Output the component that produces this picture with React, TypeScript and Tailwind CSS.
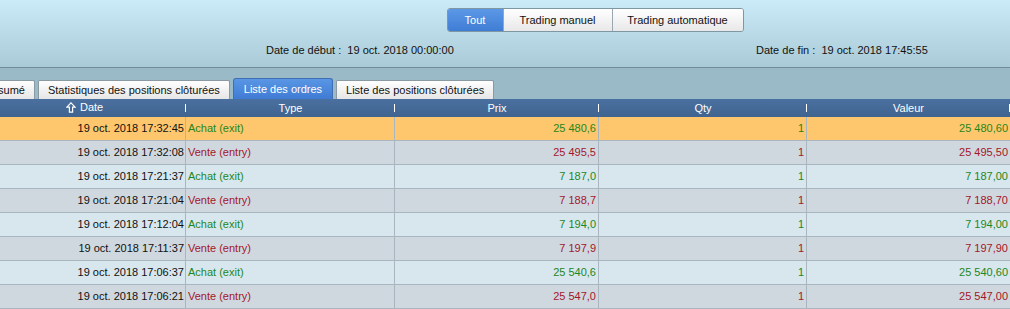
import React from 'react';

type Row = { date: string; buy: boolean; prix: string; valeur: string };

const rows: Row[] = [
  { date: '19 oct. 2018 17:32:45', buy: true, prix: '25 480,6', valeur: '25 480,60' },
  { date: '19 oct. 2018 17:32:08', buy: false, prix: '25 495,5', valeur: '25 495,50' },
  { date: '19 oct. 2018 17:21:37', buy: true, prix: '7 187,0', valeur: '7 187,00' },
  { date: '19 oct. 2018 17:21:04', buy: false, prix: '7 188,7', valeur: '7 188,70' },
  { date: '19 oct. 2018 17:12:04', buy: true, prix: '7 194,0', valeur: '7 194,00' },
  { date: '19 oct. 2018 17:11:37', buy: false, prix: '7 197,9', valeur: '7 197,90' },
  { date: '19 oct. 2018 17:06:37', buy: true, prix: '25 540,6', valeur: '25 540,60' },
  { date: '19 oct. 2018 17:06:21', buy: false, prix: '25 547,0', valeur: '25 547,00' },
];

const cols = 'grid grid-cols-[186px_209px_204px_208px_203px]';

function HeadCell({ label, sort }: { label: string; sort?: boolean }) {
  return (
    <div className="relative flex items-center justify-center h-full">
      {sort ? (
        <span className="absolute left-[66px] top-[3px] flex items-center gap-[4px]">
          <svg width="10" height="11" viewBox="0 0 10 11">
            <path d="M5 0.8 L9.2 5.2 L6.6 5.2 L6.6 10.2 L3.4 10.2 L3.4 5.2 L0.8 5.2 Z" fill="none" stroke="#fff" strokeWidth="1.2" />
          </svg>
          <span>{label}</span>
        </span>
      ) : (
        <span>{label}</span>
      )}
      <span className="absolute right-0 top-[5px] w-[1px] h-[8px] bg-white" />
    </div>
  );
}

function Tab({ label, active }: { label: string; active?: boolean }) {
  return active ? (
    <div className="h-[21px] px-[10px] flex items-center rounded-t-[3px] border border-b-0 border-[#3f6fb0] bg-gradient-to-b from-[#5a96e4] to-[#3f7bd4] text-white">
      {label}
    </div>
  ) : (
    <div className="h-[19px] px-[9px] flex items-center rounded-t-[2px] border border-b-0 border-[#8a9aa3] bg-gradient-to-b from-white to-[#e6e6e6] text-[#111]">
      {label}
    </div>
  );
}

export default function App() {
  return (
    <div className="w-[1010px] h-[309px] overflow-hidden text-[11px] leading-none font-['Liberation_Sans',Arial,sans-serif] text-[#111]">
      {/* TOP BAR */}
      <div className="h-[67px] bg-gradient-to-b from-[#cbebf8] to-[#a9cad6] pt-[8px]">
        <div className="flex justify-center pl-[180px]">
          <div className="flex h-[24px] rounded-[3px] border border-[#7f97a2] overflow-hidden">
            <div className="w-[55px] flex items-center justify-center bg-gradient-to-b from-[#5d98e6] to-[#3f7dd5] text-white">Tout</div>
            <div className="w-[109px] flex items-center justify-center border-l border-[#9aa7ae] bg-gradient-to-b from-white to-[#e8e8e8]">Trading manuel</div>
            <div className="w-[131px] flex items-center justify-center border-l border-[#9aa7ae] bg-gradient-to-b from-white to-[#e8e8e8]">Trading automatique</div>
          </div>
        </div>
        <div className="flex mt-[13px]">
          <div className="ml-[266px] w-[490px]">Date de début :&nbsp; 19 oct. 2018 00:00:00</div>
          <div>Date de fin :&nbsp; 19 oct. 2018 17:45:55</div>
        </div>
      </div>
      <div className="h-[1px] bg-[#6f8c98]" />

      {/* TABS */}
      <div className="h-[31px] bg-[#9bbac7] flex items-end gap-[3px] -ml-[26px]">
        <Tab label="Résumé" />
        <Tab label="Statistiques des positions clôturées" />
        <Tab label="Liste des ordres" active />
        <Tab label="Liste des positions clôturées" />
      </div>

      {/* TABLE */}
      <div className={`${cols} h-[18px] bg-gradient-to-b from-[#4a70a0] to-[#40648f] text-white`}>
        <HeadCell label="Date" sort />
        <HeadCell label="Type" />
        <HeadCell label="Prix" />
        <HeadCell label="Qty" />
        <HeadCell label="Valeur" />
      </div>
      {rows.map((r, i) => {
        const bg = i === 0 ? 'bg-[#fec76d]' : i % 2 === 1 ? 'bg-[#d0d8df]' : 'bg-[#d8e6ee]';
        const tc = r.buy ? 'text-[#1f861c]' : 'text-[#a3162a]';
        return (
          <div key={i} className={`${cols} h-[24px] border-b border-[#a9b6bf] ${bg}`}>
            <div className="flex items-center justify-end pr-[1px] border-r border-[#a9b6bf]">{r.date}</div>
            <div className={`flex items-center pl-[2px] border-r border-[#a9b6bf] ${tc}`}>{r.buy ? 'Achat (exit)' : 'Vente (entry)'}</div>
            <div className={`flex items-center justify-end pr-[2px] border-r border-[#a9b6bf] ${tc}`}>{r.prix}</div>
            <div className={`flex items-center justify-end pr-[2px] border-r border-[#a9b6bf] ${tc}`}>1</div>
            <div className={`flex items-center justify-end pr-[2px] ${tc}`}>{r.valeur}</div>
          </div>
        );
      })}
    </div>
  );
}
